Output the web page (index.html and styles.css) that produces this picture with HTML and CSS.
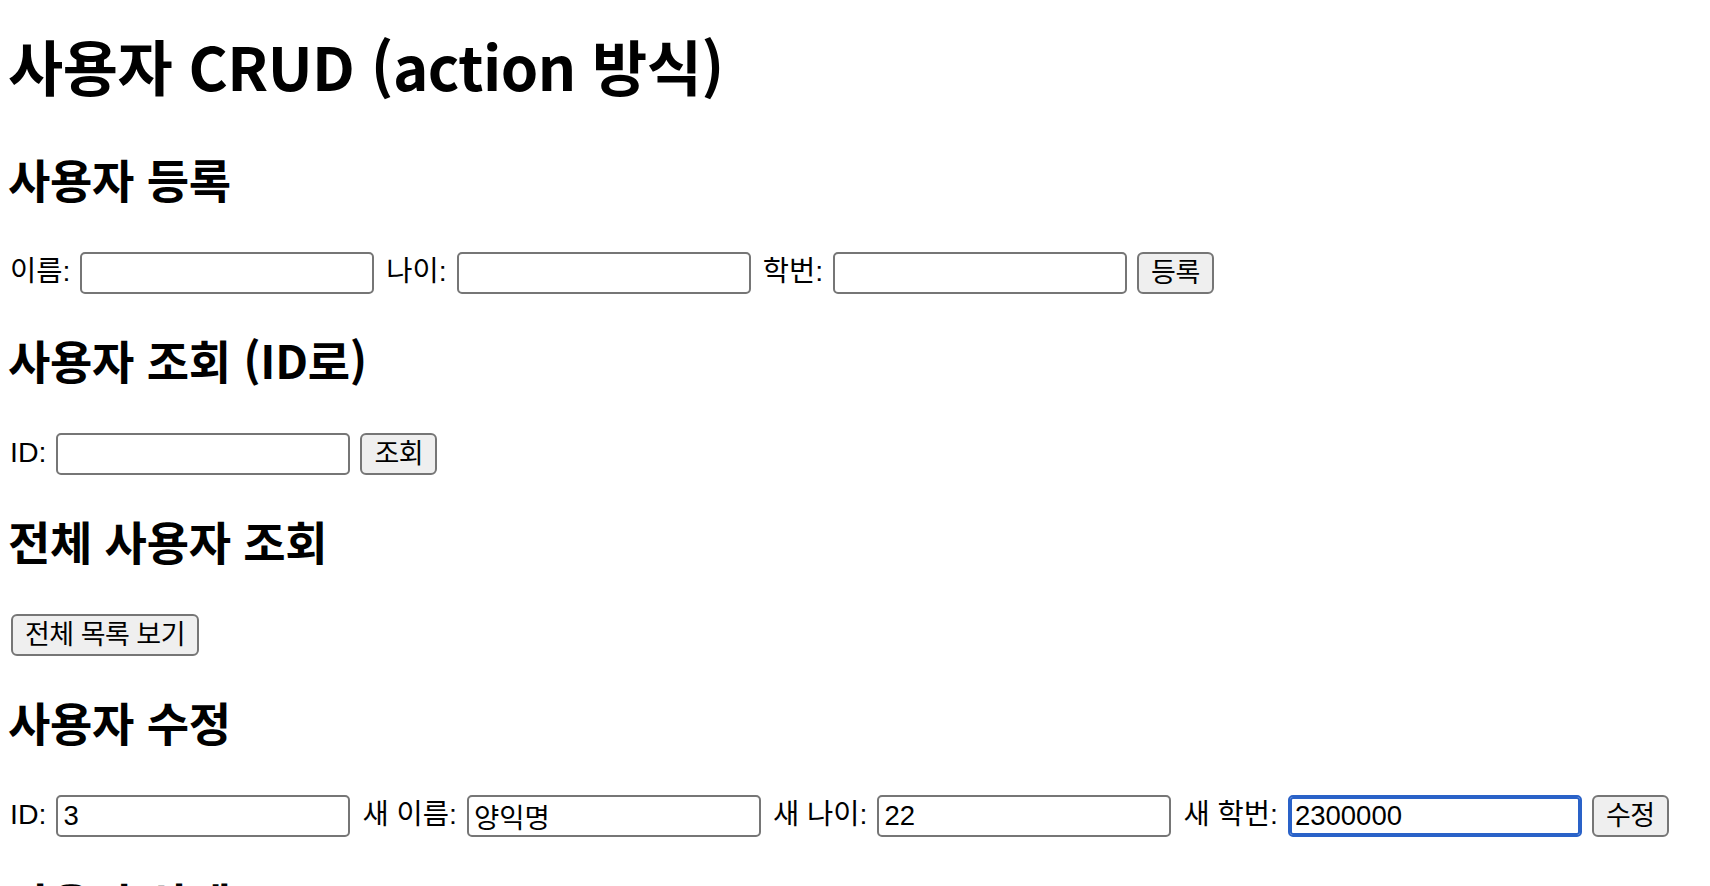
FILE: index.html
```html
<!DOCTYPE html>
<html lang="ko">
<head>
<meta charset="utf-8">
<title>사용자 CRUD (action 방식)</title>
<link rel="stylesheet" href="styles.css">
</head>
<body>
<h1 class="title">사용자 CRUD (action 방식)</h1>

<section class="section">
  <h2 class="section-title">사용자 등록</h2>
  <form class="row">
    <label class="label">이름:</label>
    <input class="field" type="text">
    <label class="label">나이:</label>
    <input class="field" type="text">
    <label class="label">학번:</label>
    <input class="field" type="text">
    <button class="btn" type="button">등록</button>
  </form>
</section>

<section class="section">
  <h2 class="section-title">사용자 조회 (ID로)</h2>
  <form class="row">
    <label class="label">ID:</label>
    <input class="field" type="text">
    <button class="btn" type="button">조회</button>
  </form>
</section>

<section class="section">
  <h2 class="section-title">전체 사용자 조회</h2>
  <form class="row">
    <button class="btn btn--solo" type="button">전체 목록 보기</button>
  </form>
</section>

<section class="section">
  <h2 class="section-title">사용자 수정</h2>
  <form class="row">
    <label class="label">ID:</label>
    <input class="field" type="text" value="3">
    <label class="label">새 이름:</label>
    <input class="field" type="text" value="양익명">
    <label class="label">새 나이:</label>
    <input class="field" type="text" value="22">
    <label class="label">새 학번:</label>
    <input class="field field--focus" type="text" value="2300000">
    <button class="btn" type="button">수정</button>
  </form>
</section>

<section class="section">
  <h2 class="section-title">사용자 삭제</h2>
  <form class="row">
    <label class="label">ID:</label>
    <input class="field" type="text">
    <button class="btn" type="button">삭제</button>
  </form>
</section>
</body>
</html>
```

FILE: styles.css
```css
html, body {
  background: #ffffff;
}

body {
  margin: 0;
  padding: 0 8px 40px;
  color: #000000;
  font-family: "Liberation Sans", "Noto Sans CJK KR", sans-serif;
}

.title {
  margin: 29px 0 50px;
  font-family: "Noto Sans CJK KR", sans-serif;
  font-weight: 700;
  font-size: 60px;
  line-height: 72px;
  letter-spacing: -0.5px;
}

.section-title {
  margin: 38px 0 47px;
  font-family: "Noto Sans CJK KR", sans-serif;
  font-weight: 700;
  font-size: 46px;
  line-height: 54px;
  letter-spacing: -0.3px;
}

.row {
  display: flex;
  align-items: center;
  gap: 10px;
  height: 42px;
  margin: 0 0 38px;
}

.label {
  font-family: "Liberation Sans", "Noto Sans CJK KR", sans-serif;
  font-size: 28.5px;
  line-height: 1;
  padding: 0 0 4px 2px;
}

.field {
  box-sizing: border-box;
  width: 294px;
  height: 42px;
  margin: 0;
  padding: 0 5px;
  border: 2px solid #767676;
  border-radius: 5px;
  background: #ffffff;
  color: #000000;
  font-family: "Liberation Sans", "Noto Sans CJK KR", sans-serif;
  font-size: 27.5px;
  outline: none;
}

.field--focus {
  border-color: #2a62c8;
  box-shadow: inset 0 0 0 2px #2a62c8;
}

.btn {
  box-sizing: border-box;
  height: 42px;
  margin: 0;
  padding: 0 12px;
  border: 2px solid #767676;
  border-radius: 6px;
  background: #efefef;
  color: #000000;
  font-family: "Liberation Sans", "Noto Sans CJK KR", sans-serif;
  font-size: 27px;
  letter-spacing: -0.5px;
  line-height: 1;
}

.btn--solo {
  margin-left: 3px;
}
```
